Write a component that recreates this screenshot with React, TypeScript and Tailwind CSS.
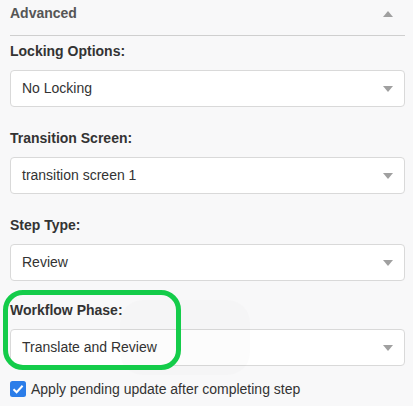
import React from 'react';

function Caret({ up }: { up?: boolean }) {
  return (
    <svg width="10" height="6" viewBox="0 0 10 6" className="shrink-0">
      <path d={up ? 'M0 6 L5 0 L10 6 Z' : 'M0 0 L10 0 L5 6 Z'} fill="#a0a0a0" />
    </svg>
  );
}

function SelectField({ label, value, className }: { label: string; value: string; className?: string }) {
  return (
    <div className={`flex flex-col ${className ?? ''}`}>
      <div className="text-[14px] leading-[20px] font-bold text-[#333]">{label}</div>
      <div className="mt-[9px] flex h-[37px] items-center justify-between rounded-[4px] border border-[#d9d9d9] bg-white pl-[11px] pr-[11px]">
        <span className="text-[14px] text-[#333]">{value}</span>
        <Caret />
      </div>
    </div>
  );
}

export default function App() {
  return (
    <div
      className="relative h-[406px] w-[413px] overflow-hidden bg-[#f8f8f9] pl-[10px] pr-[8px]"
      style={{ fontFamily: '"Liberation Sans", Arial, sans-serif' }}
    >
      <div className="flex h-[36px] items-start justify-between border-b border-[#cfcfcf] pt-[3px]">
        <span className="text-[14px] leading-[20px] font-bold text-[#555]">Advanced</span>
        <span className="mr-[12px] mt-[8px]">
          <Caret up />
        </span>
      </div>

      <div className="mt-[5px] flex flex-col">
        <SelectField label="Locking Options:" value="No Locking" />
        <SelectField className="mt-[21px]" label="Transition Screen:" value="transition screen 1" />
        <SelectField className="mt-[21px]" label="Step Type:" value="Review" />
        <SelectField className="mt-[19px]" label="Workflow Phase:" value="Translate and Review" />
      </div>

      <label className="mt-[13px] flex items-center gap-[5px]">
        <svg width="16" height="16" viewBox="0 0 16 16">
          <rect width="16" height="16" rx="2.5" fill="#2b7de9" />
          <path d="M3.5 8.2 L6.6 11.2 L12.6 4.8" stroke="white" strokeWidth="2" fill="none" />
        </svg>
        <span className="text-[14px] leading-[20px] text-[#333]">Apply pending update after completing step</span>
      </label>

      <div className="pointer-events-none absolute left-[120px] top-[300px] h-[75px] w-[130px] rounded-[22px] bg-black/[0.012]" />
      <div className="pointer-events-none absolute left-[3px] top-[290px] h-[80px] w-[178px] rounded-[20px] border-[5px] border-[#14cc4a]" />
    </div>
  );
}
